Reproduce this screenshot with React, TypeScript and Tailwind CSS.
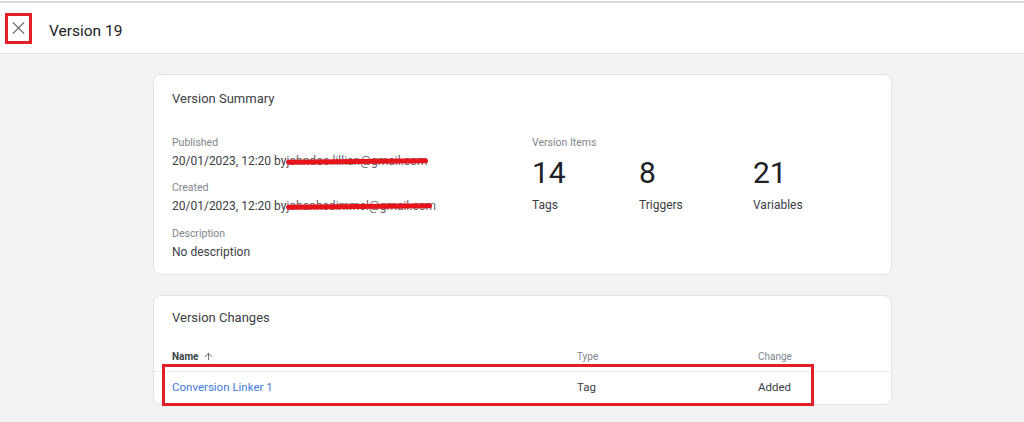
import { X, ArrowUp } from 'lucide-react';

function Redacted({ text, width }: { text: string; width: number }) {
  return (
    <span className="relative inline-block align-baseline" style={{ width }}>
      <span className="text-[#5f6368]">{text}</span>
      <span className="absolute left-0 right-[4px] top-[7px] h-[5px] rounded-full bg-[#e8141c] -rotate-[0.6deg]" />
    </span>
  );
}

function Field({ label, children }: { label: string; children: React.ReactNode }) {
  return (
    <div className="mb-[9px]">
      <div className="text-[10.5px] leading-[18px] text-[#80868b]">{label}</div>
      <div className="text-[12px] leading-[18px] text-[#3c4043] whitespace-nowrap">{children}</div>
    </div>
  );
}

function Stat({ value, label, width }: { value: string; label: string; width: string }) {
  return (
    <div className={width}>
      <div className="text-[30px] leading-[38px] text-[#202124]">{value}</div>
      <div className="mt-[4px] text-[12px] leading-[18px] text-[#3c4043]">{label}</div>
    </div>
  );
}

export default function App() {
  return (
    <div
      className="w-[1024px] h-[422px] overflow-hidden bg-[#f1f3f4]"
      style={{ fontFamily: 'Roboto, "Liberation Sans", Arial, sans-serif' }}
    >
      <div className="h-px bg-white" />
      <div className="h-[53px] bg-white border-t-2 border-b border-[#dadce0] border-b-[#e3e3e3] flex items-center">
        <div className="ml-[5px] w-[27px] h-[31px] border-[3px] border-[#e21f26] flex items-center justify-center">
          <X size={22} strokeWidth={1.4} className="text-[#70757a]" />
        </div>
        <div className="ml-[17px] mt-[8px] text-[15.5px] text-[#202124]">Version 19</div>
      </div>

      <div className="pl-[153px] pt-[20px]">
        <div className="w-[739px] h-[201px] bg-white rounded-[8px] border border-[#e3e3e3] pl-[18px] pt-[14px]">
          <div className="text-[13px] leading-[20px] text-[#3c4043]">Version Summary</div>
          <div className="mt-[25px] flex">
            <div className="w-[360px]">
              <Field label="Published">
                20/01/2023, 12:20 by<Redacted text="johndoe.lillian@gmail.com" width={146} />
              </Field>
              <Field label="Created">
                20/01/2023, 12:20 by<Redacted text="johanhedimmel@gmail.com" width={150} />
              </Field>
              <div className="pt-px">
                <Field label="Description">No description</Field>
              </div>
            </div>
            <div>
              <div className="text-[10.5px] leading-[18px] text-[#80868b]">Version Items</div>
              <div className="flex mt-[2px]">
                <Stat value="14" label="Tags" width="w-[107px]" />
                <Stat value="8" label="Triggers" width="w-[114px]" />
                <Stat value="21" label="Variables" width="w-[100px]" />
              </div>
            </div>
          </div>
        </div>

        <div className="relative mt-[20px] w-[739px] h-[110px] bg-white rounded-[8px] border border-[#e3e3e3]">
          <div className="pl-[18px] pt-[12px] text-[13px] leading-[20px] text-[#3c4043]">Version Changes</div>
          <div className="mt-[14px] h-[30px] flex items-center border-b border-[#e8eaed] text-[10px]">
            <div className="pl-[18px] w-[423px] flex items-center gap-[5px] font-bold text-[#3c4043]">
              Name <ArrowUp size={11} strokeWidth={2} className="text-[#5f6368]" />
            </div>
            <div className="w-[181px] text-[#80868b]">Type</div>
            <div className="text-[#80868b]">Change</div>
          </div>
          <div className="h-[31px] flex items-center text-[11.5px]">
            <div className="pl-[18px] w-[423px] text-[#3f7be0]">Conversion Linker 1</div>
            <div className="w-[181px] text-[#3c4043]">Tag</div>
            <div className="text-[#3c4043]">Added</div>
          </div>
          <div className="absolute left-[8px] top-[68px] w-[652px] h-[42px] border-[3px] border-[#e21f26]" />
        </div>
      </div>
    </div>
  );
}
